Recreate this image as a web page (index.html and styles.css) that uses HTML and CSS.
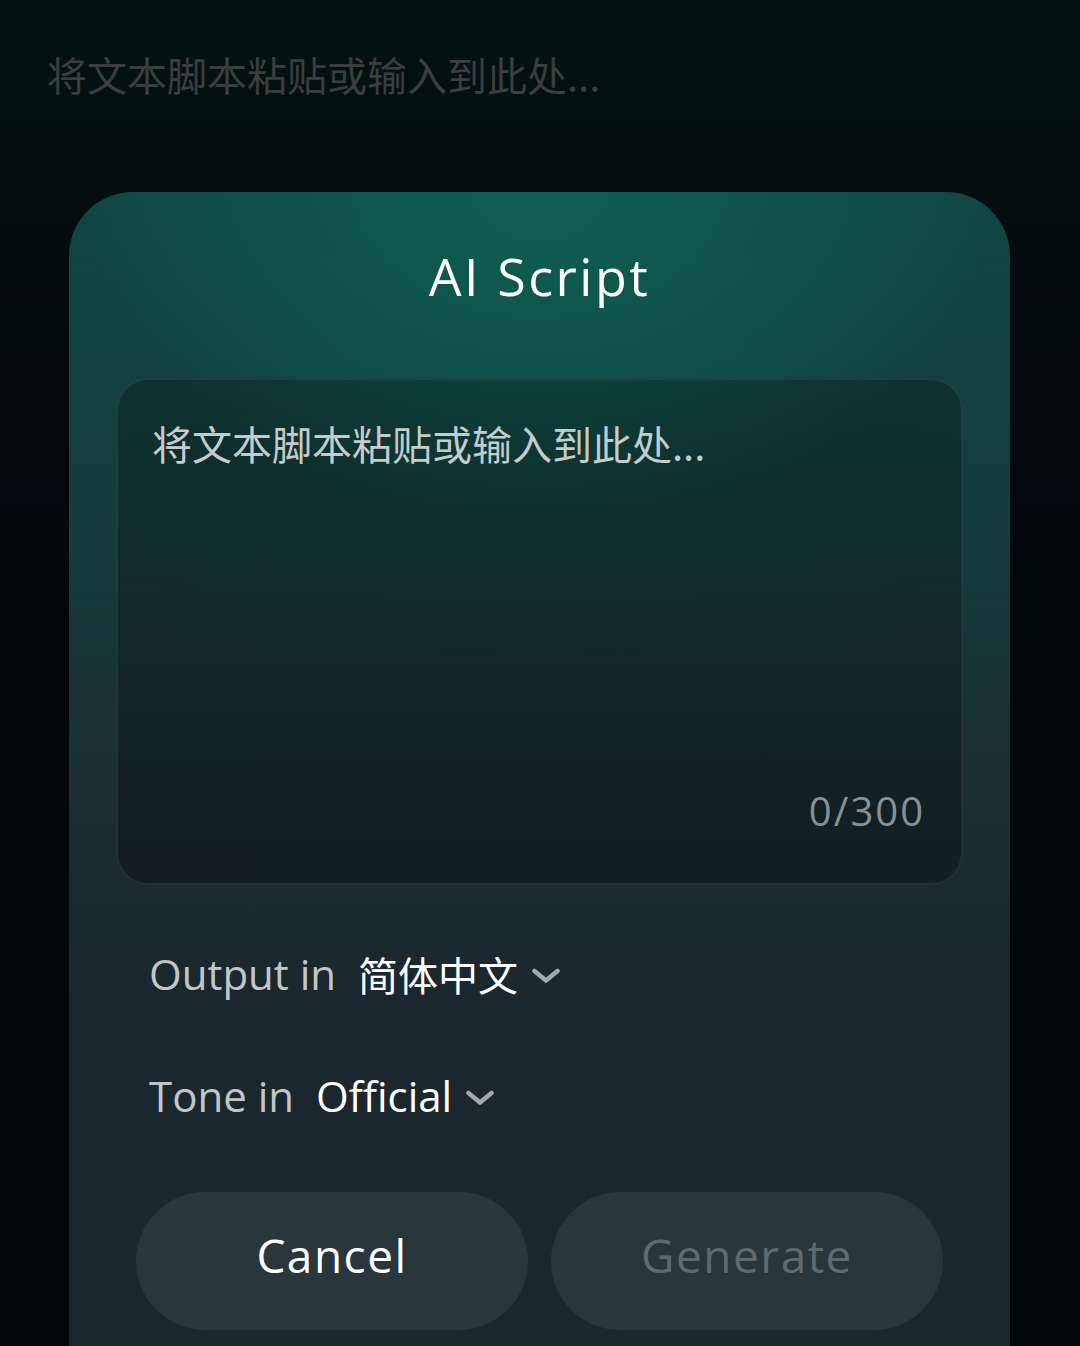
FILE: index.html
```html
<!DOCTYPE html>
<html lang="zh">
<head>
<meta charset="utf-8">
<title>AI Script</title>
<link rel="stylesheet" href="styles.css">
</head>
<body>
<div class="page">
  <div class="bg-text">将文本脚本粘贴或输入到此处...</div>
  <section class="card">
    <h1 class="title">AI Script</h1>
    <div class="textarea">
      <div class="placeholder">将文本脚本粘贴或输入到此处...</div>
      <div class="count">0/300</div>
    </div>
    <div class="option option-output">
      <span class="label">Output in</span>
      <span class="value cjk">简体中文</span>
      <svg class="chev" width="30" height="16" viewBox="0 0 30 16"><path d="M3.5 3 L15 12.5 L26.5 3" fill="none" stroke="#a2a8ab" stroke-width="4.6" stroke-linecap="round" stroke-linejoin="round"/></svg>
    </div>
    <div class="option option-tone">
      <span class="label">Tone in</span>
      <span class="value">Official</span>
      <svg class="chev" width="30" height="16" viewBox="0 0 30 16"><path d="M3.5 3 L15 12.5 L26.5 3" fill="none" stroke="#a2a8ab" stroke-width="4.6" stroke-linecap="round" stroke-linejoin="round"/></svg>
    </div>
    <div class="actions">
      <button class="btn btn-cancel">Cancel</button>
      <button class="btn btn-generate">Generate</button>
    </div>
  </section>
</div>
</body>
</html>
```

FILE: styles.css
```css
html, body {
  margin: 0;
  padding: 0;
}
body {
  width: 1080px;
  height: 1346px;
  overflow: hidden;
  background: linear-gradient(180deg, #041312 0%, #030c0d 20%, #02070a 45%, #010508 100%);
  font-family: "Open Sans", "Noto Sans CJK SC", sans-serif;
}
.page {
  display: flex;
  flex-direction: column;
  height: 1346px;
}
.bg-text {
  font-family: "Noto Sans CJK SC", sans-serif;
  font-size: 40px;
  line-height: 48px;
  color: #3a3e3f;
  padding: 50px 0 0 47px;
  height: 48px;
}
.card {
  margin: 94px 70px 0 69px;
  flex: 1;
  border-radius: 64px 64px 0 0;
  background:
    radial-gradient(ellipse 75% 45% at 50% 0%, rgba(15, 94, 82, 1) 0%, rgba(15, 84, 76, 0.85) 35%, rgba(18, 60, 60, 0.5) 65%, rgba(27, 39, 46, 0) 100%),
    linear-gradient(180deg, #0f4f49 0%, #14403f 22%, #1a2e33 50%, #1b272e 70%, #1b272e 100%);
  display: flex;
  flex-direction: column;
}
.title {
  margin: 54px 0 0;
  text-align: center;
  font-family: "Open Sans", sans-serif;
  font-weight: 500;
  font-size: 52px;
  line-height: 60px;
  letter-spacing: 2.5px;
  color: #ffffff;
}
.textarea {
  margin: 72px 47px 0 47px;
  height: 507px;
  box-sizing: border-box;
  border: 2px solid rgba(255, 255, 255, 0.07);
  border-radius: 32px;
  background: linear-gradient(180deg, rgba(0, 0, 0, 0.22) 0%, rgba(0, 0, 0, 0.28) 100%);
  padding: 39px 36px 48px 34px;
  display: flex;
  flex-direction: column;
  justify-content: space-between;
}
.placeholder {
  font-family: "Noto Sans CJK SC", sans-serif;
  font-size: 40px;
  line-height: 48px;
  color: #c6cbcb;
}
.count {
  align-self: flex-end;
  font-family: "Open Sans", sans-serif;
  font-size: 40px;
  line-height: 48px;
  letter-spacing: 2px;
  color: #879193;
}
.option {
  display: flex;
  align-items: center;
  height: 50px;
  margin-left: 80px;
}
.option-output {
  margin-top: 64px;
}
.option-tone {
  margin-top: 72px;
}
.label {
  font-size: 42px;
  line-height: 50px;
  color: #c2c6c8;
}
.value {
  font-size: 42px;
  line-height: 50px;
  color: #ffffff;
  margin-left: 22px;
}
.value.cjk {
  font-family: "Noto Sans CJK SC", sans-serif;
  font-size: 40px;
}
.chev {
  margin-left: 13px;
  margin-top: 4px;
}
.actions {
  display: flex;
  gap: 23px;
  margin: 71px 67px 0 67px;
}
.btn {
  flex: 1;
  height: 138px;
  border: none;
  border-radius: 69px;
  background: #29363c;
  font-family: "Open Sans", sans-serif;
  font-size: 46px;
  letter-spacing: 1.5px;
  padding: 0 0 12px 0;
}
.btn-cancel {
  color: #ffffff;
}
.btn-generate {
  color: #5e6a6f;
}
```
